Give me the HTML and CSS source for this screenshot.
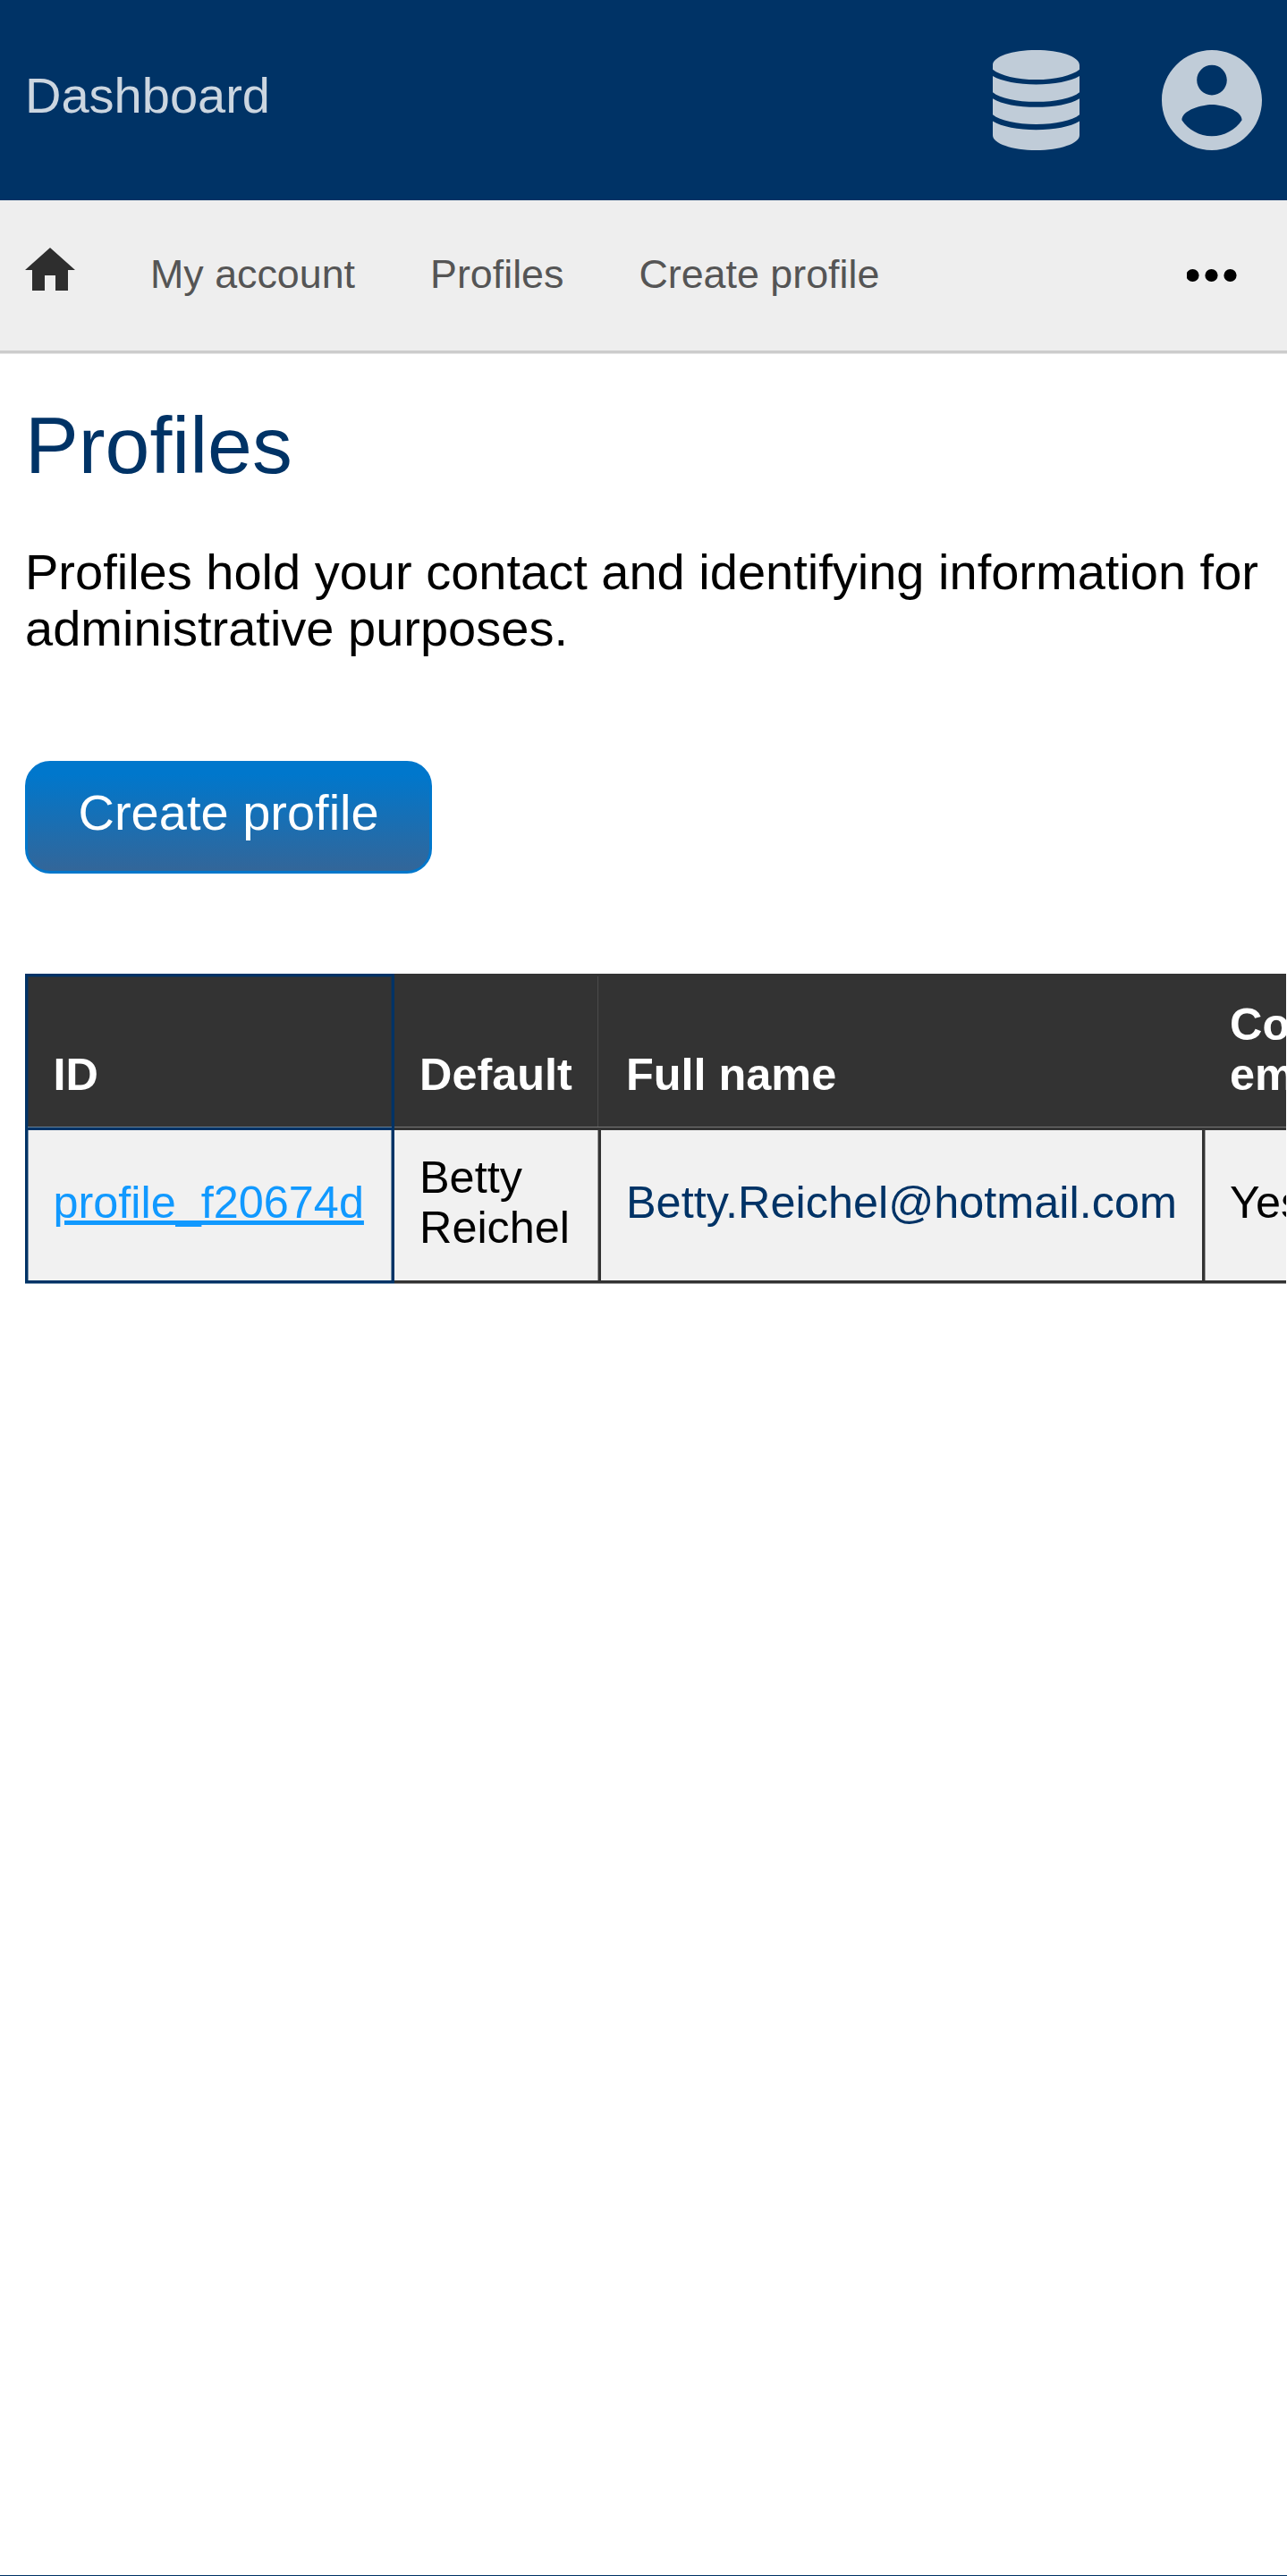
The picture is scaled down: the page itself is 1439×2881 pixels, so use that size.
FILE: index.html
```html
<!DOCTYPE html>
<html lang="en">
<head>
<meta charset="utf-8">
<title>Profiles</title>
<link rel="stylesheet" href="styles.css">
</head>
<body>
<header class="topbar">
  <a class="brand">Dashboard</a>
  <div class="actions">
    <svg class="icon-db" viewBox="0 0 290 335" preserveAspectRatio="none"><path d="M0 50C0 22 65 0 145 0S290 22 290 50V65C265 85 210 99 145 99S25 85 0 65ZM0 87C30 105 85 115 145 115S260 105 290 87V141C265 161 210 173 145 173S25 161 0 141ZM0 162C30 181 85 191 145 191S260 181 290 162V216C265 236 210 248 145 248S25 236 0 216ZM0 238C30 257 85 267 145 267S260 257 290 238V285C290 313 225 335 145 335S0 313 0 285Z"/></svg>
    <svg class="icon-user" viewBox="2 2 20 20"><path d="M12 2C6.48 2 2 6.48 2 12s4.48 10 10 10 10-4.48 10-10S17.52 2 12 2zm0 3c1.66 0 3 1.34 3 3s-1.34 3-3 3-3-1.34-3-3 1.34-3 3-3zm0 14.2c-2.5 0-4.71-1.28-6-3.22.03-1.99 4-3.08 6-3.08 1.99 0 5.97 1.09 6 3.08-1.29 1.94-3.5 3.22-6 3.22z"/></svg>
  </div>
</header>
<nav class="nav">
  <svg class="icon-home" viewBox="0 0 56 48"><path d="M28 0L56 25H48V48H34V31H22V48H8V25H0Z"/></svg>
  <a>My account</a>
  <a>Profiles</a>
  <a>Create profile</a>
  <svg class="icon-more" viewBox="0 0 56 16"><circle cx="6.5" cy="8" r="7.1"/><circle cx="27.5" cy="8" r="7.1"/><circle cx="48.5" cy="8" r="7.1"/></svg>
</nav>
<main class="content">
  <h1>Profiles</h1>
  <p>Profiles hold your contact and identifying information for administrative purposes.</p>
  <a class="button">Create profile</a>
  <div class="table-scroll">
    <table class="profiles">
      <thead>
        <tr><th class="id">ID</th><th class="default">Default</th><th class="name">Full name</th><th class="confirmed">Confirmed email</th></tr>
      </thead>
      <tbody>
        <tr><td class="id"><a>profile_f20674d</a></td><td class="default">Betty Reichel</td><td class="name">Betty.Reichel@hotmail.com</td><td class="confirmed">Yes</td></tr>
      </tbody>
    </table>
  </div>
</main>
<footer class="footer"></footer>
</body>
</html>
```
FILE: styles.css
```css
* { box-sizing: border-box; }
body {
  margin: 0;
  height: 2881px;
  display: flex;
  flex-direction: column;
  overflow: hidden;
  background: #fff;
  color: #000;
  font: 56px/63px "Liberation Sans", Arial, sans-serif;
}
svg { display: block; flex: none; }
.topbar {
  height: 224px;
  flex: none;
  display: flex;
  justify-content: space-between;
  padding: 56px 28px;
  background: #003366;
}
.brand { padding-top: 19px; color: #ccd6e0; }
.actions { display: flex; gap: 92px; fill: #c0ccd8; }
.icon-db { width: 97px; height: 112px; }
.icon-user { width: 112px; height: 112px; }
.nav {
  height: 172px;
  flex: none;
  display: flex;
  align-items: flex-start;
  gap: 84px;
  padding: 53px 56px 0 28px;
  background: #eee;
  border-bottom: 1px solid #e6e6e6;
  box-shadow: inset 0 -3px #ccc;
  color: #555;
  font-size: 44.8px;
  line-height: 58px;
}
.icon-home { width: 56px; height: 48px; fill: #2e2e2e; }
.icon-more { width: 56px; height: 16px; margin: 23px 0 0 auto; fill: #000; }
.content { flex: 1; padding: 51px 0 0 28px; }
h1 {
  margin: 0 0 58px;
  color: #003366;
  font-size: 89.6px;
  font-weight: 400;
  line-height: 103px;
}
p { margin: 0 0 117px; }
.button {
  display: block;
  width: 455px;
  height: 126px;
  padding: 23px 0 0 56.5px;
  border: 3px solid #0077cc;
  border-radius: 28px;
  background: linear-gradient(#0077cc 10%, #336699);
  color: #fff;
}
.table-scroll {
  margin: 112px 1px 0 0;
  padding-bottom: 1px;
  overflow: hidden;
}
.profiles {
  width: 1634px;
  table-layout: fixed;
  border-collapse: separate;
  border-spacing: 0;
  font-size: 50.4px;
  line-height: 56px;
  text-align: left;
}
.id { width: 413px; }
.default { width: 231px; }
.name { width: 675px; }
th, td {
  border: 0 solid #333;
  border-bottom-width: 3px;
}
th {
  height: 175px;
  padding: 29px 0 31px 28px;
  vertical-align: bottom;
  background: #333;
  color: #fff;
  box-shadow: inset 0 -1px #777;
}
td {
  height: 171px;
  padding: 25px 0 31px 28px;
  vertical-align: middle;
  background: #f1f1f1;
  box-shadow: 0 1px #999;
}
.default, .name { border-right-width: 3px; }
th.default, th.name { border-right-width: 0; }
th.default { box-shadow: inset 0 -1px #777; }
th.name { border-left: 0; }
td.default { box-shadow: inset -1px 0 #999, 0 1px #999; }
td.confirmed { box-shadow: inset 1px 0 #999, 0 1px #999; }
th.default {
  background: linear-gradient(#4b4b4b, #4b4b4b) 227px 3px / 1px 100% no-repeat #333;
}
.id {
  border-color: #003366;
  border-left-width: 3px;
  border-right-width: 3px;
}
th.id, td.id { padding-left: 28.5px; }
th.id {
  border-top-width: 3px;
  box-shadow: inset 0 -1px #668099, inset 0 0 0 1px #1f334a;
}
td.id { box-shadow: inset 1px 0 #7992ab, inset -1px 0 #7992ab, 0 1px #8099b3; }
td.id a {
  color: #1199ff;
  text-decoration: underline;
}
td.name { color: #003366; }
.footer { height: 1px; flex: none; background: #003366; }
```
